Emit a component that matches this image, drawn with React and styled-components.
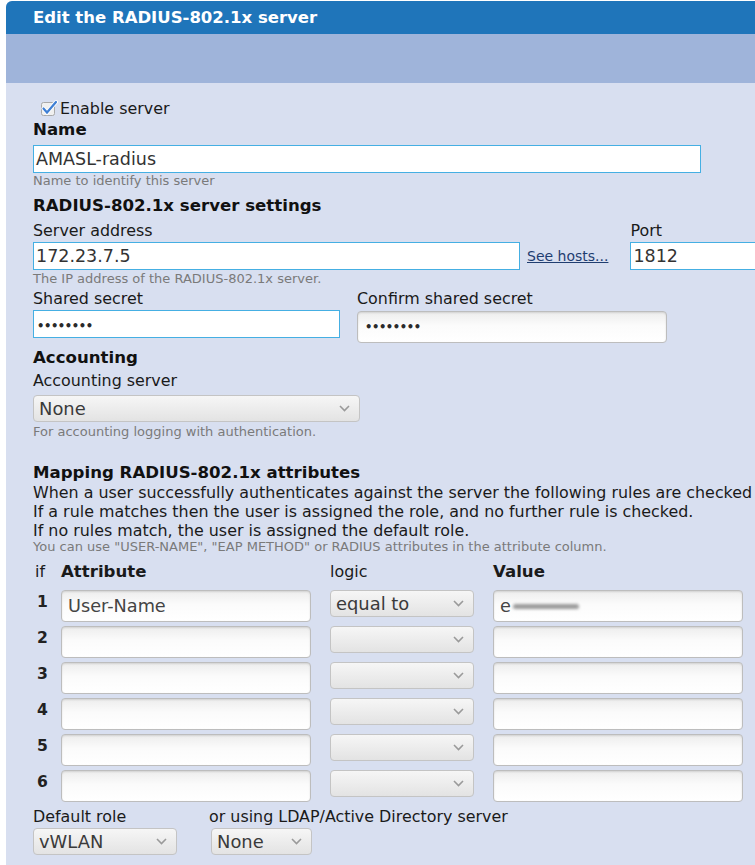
import React from 'react'
import styled, { createGlobalStyle } from 'styled-components'

const GlobalStyle = createGlobalStyle`
  body {
    margin: 0;
    background: #fff;
    font-family: "DejaVu Sans", Verdana, sans-serif;
  }
`

const Panel = styled.div`
  margin: 1px 0 0 6px;
  border-radius: 6px 0 0 0;
  overflow: hidden;
  background: #d8dff0;
  min-height: 864px;
`
const Header = styled.div`
  height: 33px;
  line-height: 34px;
  padding-left: 27px;
  background: #1f75ba;
  color: #fff;
  font-weight: bold;
  font-size: 16.5px;
`
const SubBar = styled.div`
  height: 49px;
  background: #9fb4da;
`
const Body = styled.div`
  padding: 14px 0 20px 27px;
  color: #1a1a1a;
`
const Label = styled.div`
  font-size: 15.9px;
  line-height: 22px;
  margin-top: ${p => p.$mt || 0}px;
  white-space: nowrap;
`
const Heading = styled(Label)`
  font-weight: bold;
  font-size: 16.6px;
  line-height: ${p => p.$lh || 22}px;
  color: #111;
`
const Help = styled.div`
  font-size: 13px;
  line-height: 14px;
  color: #7a7a7a;
  margin-top: ${p => p.$mt || 0}px;
  white-space: nowrap;
`
const CheckRow = styled.label`
  display: flex;
  align-items: center;
  height: 22px;
  font-size: 15.9px;
  gap: 2px;
  padding-left: 7px;
`
const BlueInput = styled.div`
  box-sizing: border-box;
  width: ${p => p.$w}px;
  height: 28px;
  margin-top: ${p => p.$mt || 0}px;
  border: 1px solid #45afe3;
  background: #fff;
  padding: 0 2px;
  font-size: 17.5px;
  line-height: 26px;
  color: #333;
  white-space: nowrap;
  overflow: hidden;
`
const Dots = styled.span`
  font-size: 11.5px;
  font-weight: bold;
  letter-spacing: -0.4px;
  color: #2a2a2a;
  padding-left: 1px;
`
const GreyInput = styled.div`
  box-sizing: border-box;
  width: ${p => p.$w}px;
  height: 32px;
  margin-top: ${p => p.$mt || 0}px;
  border: 1px solid #bdbdbd;
  border-radius: 4px;
  background: linear-gradient(#ededed, #fbfbfb 45%, #fff);
  box-shadow: inset 0 1px 2px rgba(0, 0, 0, 0.12);
  padding: 0 6px;
  font-size: 17.7px;
  color: #444;
  white-space: nowrap;
  display: flex;
  align-items: center;
`
const SelectBox = styled.div`
  box-sizing: border-box;
  width: ${p => p.$w}px;
  height: 27px;
  border: 1px solid #c4c4c4;
  border-radius: 4px;
  background: linear-gradient(#f6f6f6, #e3e3e3);
  display: flex;
  align-items: center;
  justify-content: space-between;
  padding: 0 9px 0 5px;
  font-size: 17.9px;
  color: #3a3a3a;
  white-space: nowrap;
`
const Row = styled.div`
  display: flex;
  align-items: ${p => p.$align || 'flex-start'};
  margin-top: ${p => p.$mt || 0}px;
`
const Col = styled.div`
  display: flex;
  flex-direction: column;
  width: ${p => (p.$w ? `${p.$w}px` : 'auto')};
  margin-left: ${p => p.$ml || 0}px;
  margin-top: ${p => p.$mt || 0}px;
  flex-shrink: 0;
`
const HostsLink = styled.a`
  font-size: 14px;
  color: #1f3d70;
  text-decoration: underline;
  margin: 0 0 6px 7px;
  white-space: nowrap;
`
const Para = styled.div`
  font-size: 15.9px;
  line-height: 19px;
  white-space: nowrap;
`
const Grid = styled.div`
  display: grid;
  grid-template-columns: 28px 269px 163px 250px;
  margin-top: ${p => p.$mt || 0}px;
  align-items: start;
`
const HeadCell = styled.div`
  line-height: 22px;
  font-weight: ${p => (p.$bold ? 'bold' : 'normal')};
  font-size: ${p => (p.$bold ? 16.6 : 15.9)}px;
  padding-left: ${p => p.$pl || 0}px;
`
const Num = styled.div`
  font-size: 15.6px;
  line-height: 22px;
  padding: 1px 0 0 4px;
  font-weight: 600;
  color: #222;
`
const Redacted = styled.span`
  display: inline-block;
  width: 66px;
  height: 5px;
  margin-left: 2px;
  background: #9a9a9a;
  border-radius: 3px;
  filter: blur(1.5px);
`

const Chevron = () => (
  <svg width="11" height="7" viewBox="0 0 11 7">
    <polyline points="1,1 5.5,5.5 10,1" fill="none" stroke="#9a9a9a" strokeWidth="1.6" />
  </svg>
)

const CheckIcon = () => (
  <svg width="18" height="18" viewBox="0 0 18 18">
    <rect x="1.5" y="3.5" width="13" height="13" rx="2" fill="#f0f0f0" stroke="#a9a9a9" />
    <path d="M3.5 9.5 L7 13.5 L16 3" fill="none" stroke="#fff" strokeWidth="4" strokeLinecap="round" />
    <path d="M3.5 9.5 L7 13.5 L16 3" fill="none" stroke="#3f7fd4" strokeWidth="2.2" strokeLinecap="round" />
  </svg>
)

const Select = ({ w, children }) => (
  <SelectBox $w={w}>
    <span>{children}</span>
    <Chevron />
  </SelectBox>
)

const rules = [
  { attr: 'User-Name', logic: 'equal to', value: true },
  {}, {}, {}, {}, {},
]

const secret = '••••••••'

const App = () => {
  return (
    <Panel>
      <GlobalStyle />
      <Header>Edit the RADIUS-802.1x server</Header>
      <SubBar />
      <Body>
        <CheckRow>
          <CheckIcon />
          Enable server
        </CheckRow>
        <Heading>Name</Heading>
        <BlueInput $w={668} $mt={4}>AMASL-radius</BlueInput>
        <Help $mt={1}>Name to identify this server</Help>

        <Heading $mt={7}>RADIUS-802.1x server settings</Heading>
        <Row $align="flex-end" $mt={3}>
          <Col>
            <Label>Server address</Label>
            <BlueInput $w={487}>172.23.7.5</BlueInput>
          </Col>
          <HostsLink>See hosts...</HostsLink>
          <Col $ml={22}>
            <Label>Port</Label>
            <BlueInput $w={140}>1812</BlueInput>
          </Col>
        </Row>
        <Help $mt={2}>The IP address of the RADIUS-802.1x server.</Help>

        <Row $mt={2}>
          <Col $w={324}>
            <Label>Shared secret</Label>
            <BlueInput $w={307}><Dots>{secret}</Dots></BlueInput>
          </Col>
          <Col>
            <Label>Confirm shared secret</Label>
            <GreyInput $w={310} $mt={1}><Dots>{secret}</Dots></GreyInput>
          </Col>
        </Row>

        <Heading $mt={4}>Accounting</Heading>
        <Label $mt={1}>Accounting server</Label>
        <Col $mt={3}>
          <Select w={327}>None</Select>
        </Col>
        <Help $mt={3}>For accounting logging with authentication.</Help>

        <Heading $mt={24} $lh={20}>Mapping RADIUS-802.1x attributes</Heading>
        <Para>When a user successfully authenticates against the server the following rules are checked</Para>
        <Para>If a rule matches then the user is assigned the role, and no further rule is checked.</Para>
        <Para>If no rules match, the user is assigned the default role.</Para>
        <Help>You can use "USER-NAME", "EAP METHOD" or RADIUS attributes in the attribute column.</Help>

        <Grid $mt={7}>
          <HeadCell $pl={2}>if</HeadCell>
          <HeadCell $bold>Attribute</HeadCell>
          <HeadCell>logic</HeadCell>
          <HeadCell $bold>Value</HeadCell>
        </Grid>
        {rules.map((r, i) => (
          <Grid key={i} $mt={i === 0 ? 7 : 4}>
            <Num>{i + 1}</Num>
            <GreyInput $w={250}>{r.attr}</GreyInput>
            <Select w={144}>{r.logic}</Select>
            <GreyInput $w={250}>
              {r.value && (
                <>
                  e<Redacted />
                </>
              )}
            </GreyInput>
          </Grid>
        ))}

        <Row $mt={4}>
          <Col $w={176}>
            <Label>Default role</Label>
            <Select w={144}>vWLAN</Select>
          </Col>
          <Col>
            <Label>or using LDAP/Active Directory server</Label>
            <Col $ml={2}>
              <Select w={101}>None</Select>
            </Col>
          </Col>
        </Row>
      </Body>
    </Panel>
  )
}

export default App
